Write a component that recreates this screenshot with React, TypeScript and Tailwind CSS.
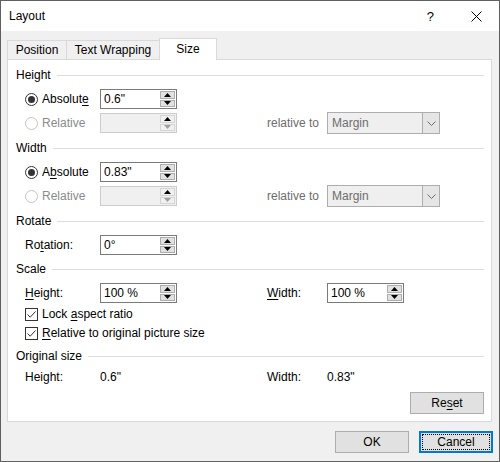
import React from 'react';

const font = "font-['Liberation_Sans',Arial,sans-serif]";

function Ul({ children }: { children: React.ReactNode }) {
  return <span className="underline underline-offset-[2px] decoration-1">{children}</span>;
}

function Radio({ checked, disabled }: { checked?: boolean; disabled?: boolean }) {
  return (
    <span
      className={`flex h-[13px] w-[13px] shrink-0 items-center justify-center rounded-full border bg-white ${
        disabled ? 'border-[#c4c4c4]' : 'border-[#333333]'
      }`}
    >
      {checked && <span className="h-[7px] w-[7px] rounded-full bg-[#333333]" />}
    </span>
  );
}

function Check() {
  return (
    <span className="flex h-[13px] w-[13px] shrink-0 items-center justify-center border border-[#333333] bg-white">
      <svg width="11" height="11" viewBox="0 0 11 11">
        <path d="M1.5 5.5 L4.2 8.2 L9.5 2.5" fill="none" stroke="#333333" strokeWidth="1" />
      </svg>
    </span>
  );
}

function Spin({ value, disabled }: { value?: string; disabled?: boolean }) {
  const btn = disabled ? 'border-[#d4d4d4] bg-[#f0f0f0]' : 'border-[#adadad] bg-[#e1e1e1]';
  return (
    <div
      className={`flex h-[20px] w-[77px] shrink-0 items-stretch border ${
        disabled ? 'border-[#cccccc] bg-[#f0f0f0]' : 'border-[#7a7a7a] bg-white'
      }`}
    >
      <div className="flex flex-1 items-center pl-[3px] text-black">{value}</div>
      <div className="my-px mr-px flex w-[15px] flex-col gap-px">
        <div className={`flex flex-1 items-center justify-center border ${btn}`}>
          <svg width="7" height="4" viewBox="0 0 7 4">
            <path d="M0 4 L3.5 0 L7 4 Z" fill="#000000" />
          </svg>
        </div>
        <div className={`flex flex-1 items-center justify-center border ${btn}`}>
          <svg width="7" height="4" viewBox="0 0 7 4">
            <path d="M0 0 L3.5 4 L7 0 Z" fill={disabled ? '#a0a0a0' : '#000000'} />
          </svg>
        </div>
      </div>
    </div>
  );
}

function Dropdown({ value }: { value: string }) {
  return (
    <div className="flex h-[22px] w-[113px] items-stretch border border-[#adadad] bg-[#efefef] text-[#6d6d6d]">
      <div className="flex flex-1 items-center pl-[4px]">{value}</div>
      <div className="flex w-[17px] items-center justify-center border-l border-[#adadad] bg-[#e5e5e5]">
        <svg width="9" height="5" viewBox="0 0 9 5">
          <path d="M0.5 0.5 L4.5 4.5 L8.5 0.5" fill="none" stroke="#6d6d6d" strokeWidth="1" />
        </svg>
      </div>
    </div>
  );
}

function Section({ title, className = '' }: { title: string; className?: string }) {
  return (
    <div className={`flex h-[16px] items-center gap-[6px] ${className}`}>
      <span className="text-black">{title}</span>
      <div className="h-px flex-1 bg-[#dcdcdc]" />
    </div>
  );
}

function RelativeRow({ className = '' }: { className?: string }) {
  return (
    <div className={`flex h-[20px] items-center pl-[9px] ${className}`}>
      <div className="flex w-[75px] items-center gap-[4px] text-[#8a8a8a]">
        <Radio disabled />
        <span>Relative</span>
      </div>
      <Spin disabled />
      <span className="ml-[90px] w-[60px] text-[#6d6d6d]">relative to</span>
      <Dropdown value="Margin" />
    </div>
  );
}

function Button({ children, focused }: { children: React.ReactNode; focused?: boolean }) {
  if (focused) {
    return (
      <div className="flex h-[22px] w-[74px] items-center justify-center border-2 border-[#0078d7] bg-[#e1e1e1] p-px">
        <div className="flex h-full w-full items-center justify-center border border-dotted border-black">
          {children}
        </div>
      </div>
    );
  }
  return (
    <div className="flex h-[22px] w-[74px] items-center justify-center border border-[#adadad] bg-[#e1e1e1]">
      {children}
    </div>
  );
}

export default function App() {
  return (
    <div className={`${font} h-[462px] w-[500px] border border-[#5f5f5f] bg-[#f0f0f0] text-[12px] leading-none text-black`}>
      {/* title bar */}
      <div className="flex h-[30px] items-center bg-white pl-[8px]">
        <span className="text-[12px]">Layout</span>
        <span className="ml-auto mr-[37px] text-[13px]">?</span>
        <svg width="11" height="11" viewBox="0 0 11 11" className="mr-[17px]">
          <path d="M0.5 0.5 L10.5 10.5 M10.5 0.5 L0.5 10.5" stroke="#000000" strokeWidth="1" />
        </svg>
      </div>

      {/* tabs */}
      <div className="flex h-[28px] items-end pl-[6px] pt-[7px]">
        <div className="flex h-[19px] w-[59px] items-center justify-center border-l border-t border-[#d9d9d9]">
          Position
        </div>
        <div className="flex h-[19px] w-[93px] items-center justify-center border-l border-t border-[#d9d9d9]">
          Text Wrapping
        </div>
        <div className="relative z-10 -mb-px flex h-[22px] w-[58px] items-center justify-center border-x border-t border-[#d9d9d9] bg-white pb-[2px]">
          Size
        </div>
      </div>

      {/* panel */}
      <div className="ml-[6px] flex h-[363px] w-[485px] flex-col border border-[#d9d9d9] bg-white pl-[8px] pr-[7px] pt-[7px]">
        <Section title="Height" />
        <div className="mt-[6px] flex h-[20px] items-center pl-[9px]">
          <div className="flex w-[75px] items-center gap-[4px]">
            <Radio checked />
            <span>
              Absolut<Ul>e</Ul>
            </span>
          </div>
          <Spin value={'0.6"'} />
        </div>
        <RelativeRow className="mt-[4px]" />

        <Section title="Width" className="mt-[7px]" />
        <div className="mt-[6px] flex h-[20px] items-center pl-[9px]">
          <div className="flex w-[75px] items-center gap-[4px]">
            <Radio checked />
            <span>
              A<Ul>b</Ul>solute
            </span>
          </div>
          <Spin value={'0.83"'} />
        </div>
        <RelativeRow className="mt-[4px]" />

        <Section title="Rotate" className="mt-[7px]" />
        <div className="mt-[6px] flex h-[20px] items-center pl-[9px]">
          <span className="w-[75px]">
            Ro<Ul>t</Ul>ation:
          </span>
          <Spin value="0°" />
        </div>

        <Section title="Scale" className="mt-[6px]" />
        <div className="mt-[6px] flex h-[20px] items-center pl-[9px]">
          <span className="w-[75px]">
            <Ul>H</Ul>eight:
          </span>
          <Spin value="100 %" />
          <span className="ml-[90px] w-[60px]">
            <Ul>W</Ul>idth:
          </span>
          <Spin value="100 %" />
        </div>
        <div className="mt-[3px] flex h-[16px] items-center gap-[4px] pl-[9px]">
          <Check />
          <span>
            Lock <Ul>a</Ul>spect ratio
          </span>
        </div>
        <div className="mt-[3px] flex h-[16px] items-center gap-[4px] pl-[9px]">
          <Check />
          <span>
            <Ul>R</Ul>elative to original picture size
          </span>
        </div>

        <Section title="Original size" className="mt-[7px]" />
        <div className="mt-[5px] flex h-[16px] items-center pl-[9px]">
          <span className="w-[75px]">Height:</span>
          <span className="w-[167px]">0.6"</span>
          <span className="w-[60px]">Width:</span>
          <span>0.83"</span>
        </div>

        <div className="mt-[7px] flex justify-end">
          <Button>
            Re<Ul>s</Ul>et
          </Button>
        </div>
      </div>

      {/* bottom buttons */}
      <div className="mt-[9px] flex justify-end gap-[10px] pr-[6px]">
        <Button>OK</Button>
        <Button focused>Cancel</Button>
      </div>
    </div>
  );
}
